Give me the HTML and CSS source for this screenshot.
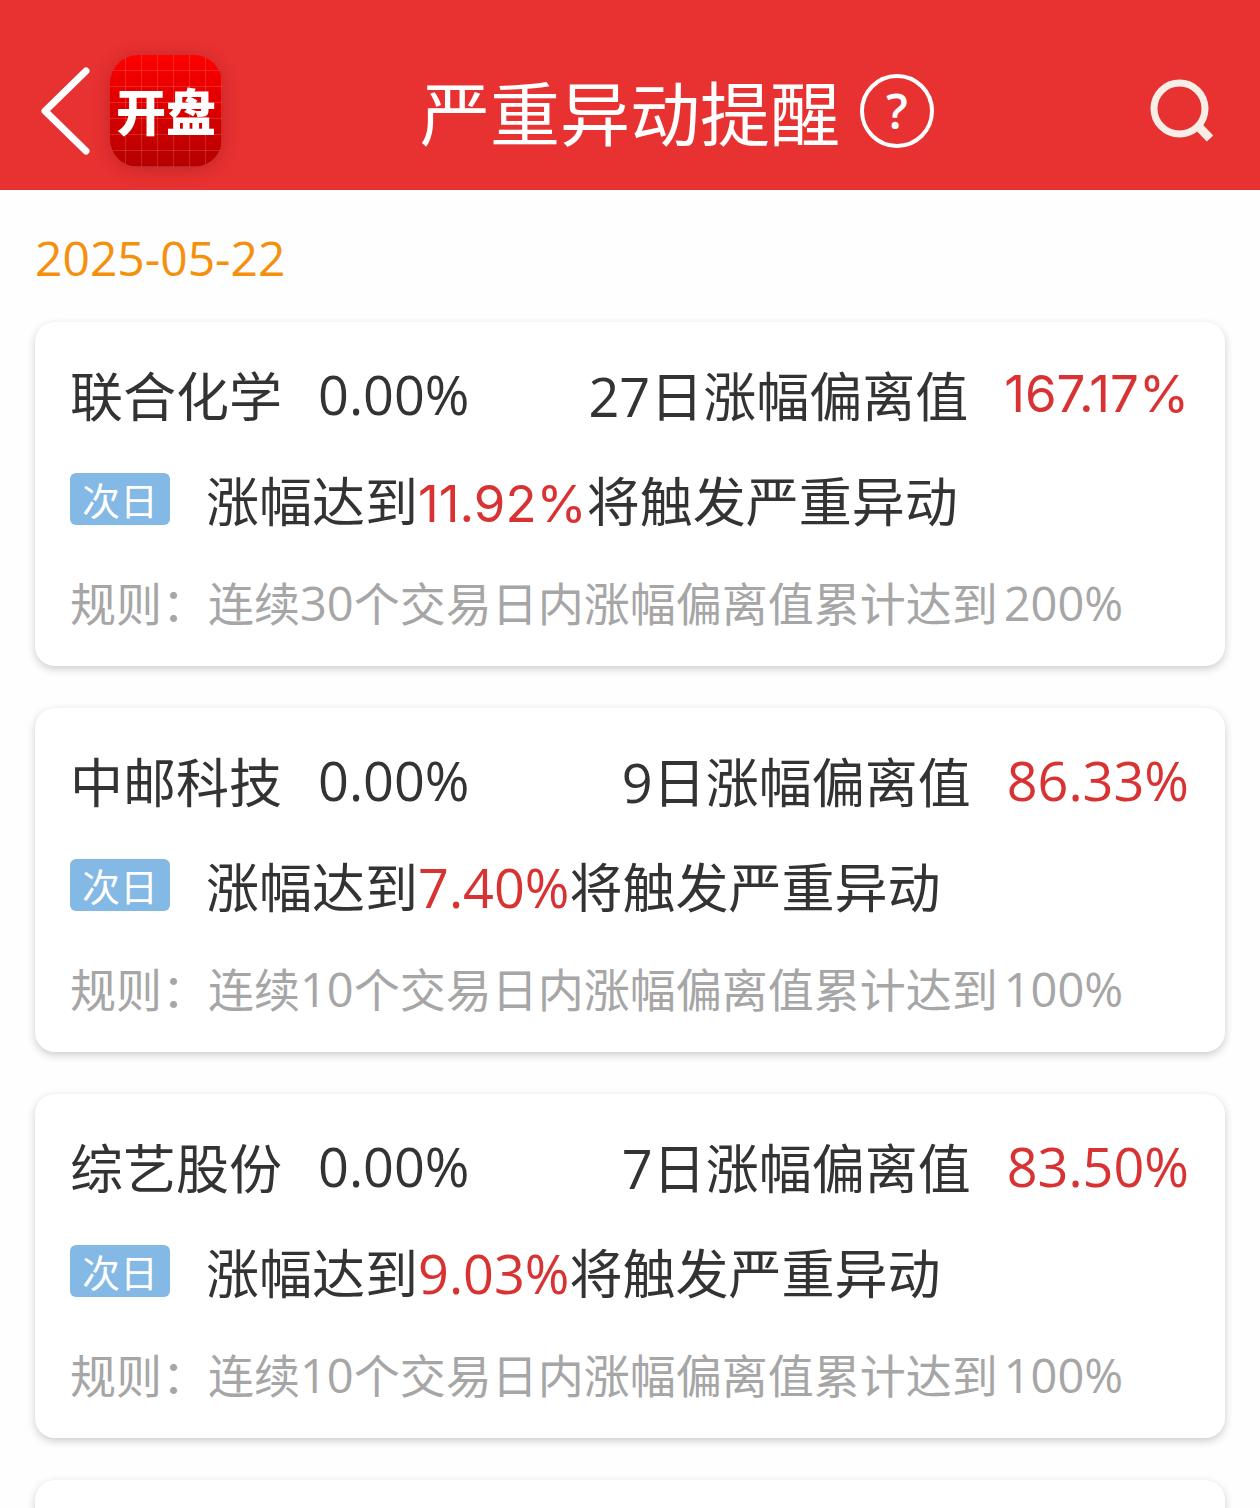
FILE: index.html
```html
<!DOCTYPE html>
<html lang="zh-CN">
<head>
<meta charset="utf-8">
<meta name="viewport" content="width=device-width, initial-scale=1">
<title>严重异动提醒</title>
<link rel="stylesheet" href="styles.css">
</head>
<body>
<header class="topbar">
  <div class="topbar-side">
    <button class="icon-button" type="button" aria-label="返回">
      <svg width="50" height="90" viewBox="0 0 50 90"><path d="M46 5 5 45 46 85" fill="none" stroke="#fff" stroke-width="7" stroke-linecap="round" stroke-linejoin="round"/></svg>
    </button>
    <a class="app-logo" href="#">开盘</a>
  </div>
  <h1 class="title">严重异动提醒</h1>
  <div class="topbar-side topbar-end">
    <button class="icon-button help" type="button" aria-label="帮助">?</button>
    <button class="icon-button search" type="button" aria-label="搜索">
      <svg width="64" height="64" viewBox="0 0 64 64" fill="none" stroke="#f7eee8" stroke-width="7"><circle cx="29.500" cy="29.500" r="25.500"/><path d="M47 46 60 59.500" stroke-width="9"/></svg>
    </button>
  </div>
</header>
<main class="content">
  <time class="date" datetime="2025-05-22">2025-05-22</time>
  <article class="card">
    <div class="row">
      <h2 class="name">联合化学</h2><span class="num">0.00%</span>
      <span class="label"><span class="num">27</span>日涨幅偏离值</span><span class="num compact up">167.17%</span>
    </div>
    <div class="row">
      <span class="tag">次日</span>
      <p class="alert">涨幅达到<span class="num compact up">11.92%</span>将触发严重异动</p>
    </div>
    <p class="rule">规则：连续<span class="num">30</span>个交易日内涨幅偏离值累计达到<span class="num limit">200%</span></p>
  </article>
  <article class="card">
    <div class="row">
      <h2 class="name">中邮科技</h2><span class="num">0.00%</span>
      <span class="label"><span class="num">9</span>日涨幅偏离值</span><span class="num up">86.33%</span>
    </div>
    <div class="row">
      <span class="tag">次日</span>
      <p class="alert">涨幅达到<span class="num up">7.40%</span>将触发严重异动</p>
    </div>
    <p class="rule">规则：连续<span class="num">10</span>个交易日内涨幅偏离值累计达到<span class="num limit">100%</span></p>
  </article>
  <article class="card">
    <div class="row">
      <h2 class="name">综艺股份</h2><span class="num">0.00%</span>
      <span class="label"><span class="num">7</span>日涨幅偏离值</span><span class="num up">83.50%</span>
    </div>
    <div class="row">
      <span class="tag">次日</span>
      <p class="alert">涨幅达到<span class="num up">9.03%</span>将触发严重异动</p>
    </div>
    <p class="rule">规则：连续<span class="num">10</span>个交易日内涨幅偏离值累计达到<span class="num limit">100%</span></p>
  </article>
  <article class="card"></article>
</main>
</body>
</html>
```

FILE: styles.css
```css
* {
  box-sizing: border-box;
  margin: 0;
  padding: 0;
}

html {
  height: 100%;
}

body {
  height: 100%;
  display: flex;
  flex-direction: column;
  overflow: hidden;
  background: #fefefe;
  color: #333;
  font-family: "Noto Sans CJK SC", sans-serif;
  font-weight: 400;
}

.topbar {
  flex: none;
  display: grid;
  grid-template-columns: 1fr auto 1fr;
  align-items: center;
  padding: 55px 40px 23px;
  background: #e83131;
  color: #fff;
}

.topbar-side {
  display: flex;
  align-items: center;
  gap: 20px;
}

.topbar-end {
  justify-content: space-between;
  padding: 0 6px 0 20px;
}

.title {
  font-size: 70px;
  line-height: 112px;
  font-weight: 400;
}

.icon-button {
  display: flex;
  align-items: center;
  justify-content: center;
  border: 0;
  background: none;
  color: inherit;
}

.help {
  width: 74px;
  height: 74px;
  border: 4px solid #fff;
  border-radius: 50%;
  font: 600 48px/1 "Open Sans", sans-serif;
}

.app-logo {
  width: 112px;
  height: 112px;
  border-radius: 28px;
  background:
    repeating-linear-gradient(90deg, transparent 0 15px, rgba(255, 255, 255, .15) 15px 16px),
    repeating-linear-gradient(transparent 0 15px, rgba(255, 255, 255, .15) 15px 16px),
    linear-gradient(#f00, #b40000);
  box-shadow: 0 2px 16px rgba(120, 20, 20, .35);
  color: #fff;
  font-size: 50px;
  font-weight: 900;
  line-height: 108px;
  text-align: center;
  text-decoration: none;
}

.num {
  font-family: "Open Sans", sans-serif;
  font-size: 54px;
  line-height: 0;
}

.compact {
  font-family: Inter, sans-serif;
  font-size: 51px;
}

.content {
  flex: 1;
  min-height: 0;
  overflow: hidden;
  display: flex;
  flex-direction: column;
  gap: 40px;
  padding: 44px 35px 0;
}

.date {
  color: #f5900f;
  font-family: "Open Sans", sans-serif;
  font-size: 48px;
  line-height: 48px;
}

.card {
  flex: none;
  min-height: 344px;
  margin-bottom: 2px;
  display: flex;
  flex-direction: column;
  gap: 53px;
  padding: 46px 36px 40px 35px;
  border-radius: 20px;
  background: #fff;
  box-shadow: 0 3px 8px rgba(0, 0, 0, .2);
}

.row {
  display: flex;
  align-items: center;
  height: 52px;
  font-size: 53px;
  line-height: 52px;
  white-space: nowrap;
}

.name {
  margin-right: 36px;
  font-size: 53px;
  font-weight: 400;
}

.label {
  margin-left: auto;
  margin-right: 36px;
}

.tag {
  width: 100px;
  margin-right: 36px;
  border-radius: 6px;
  background: #84b8e5;
  color: #fff;
  font-size: 38px;
  text-align: center;
}

.up {
  color: #d93232;
}

.rule {
  color: #a6a6a6;
  font-size: 46px;
  line-height: 46px;
  white-space: nowrap;
}

.rule .num {
  font-size: 47px;
}

.limit {
  margin-left: 6px;
}
```
